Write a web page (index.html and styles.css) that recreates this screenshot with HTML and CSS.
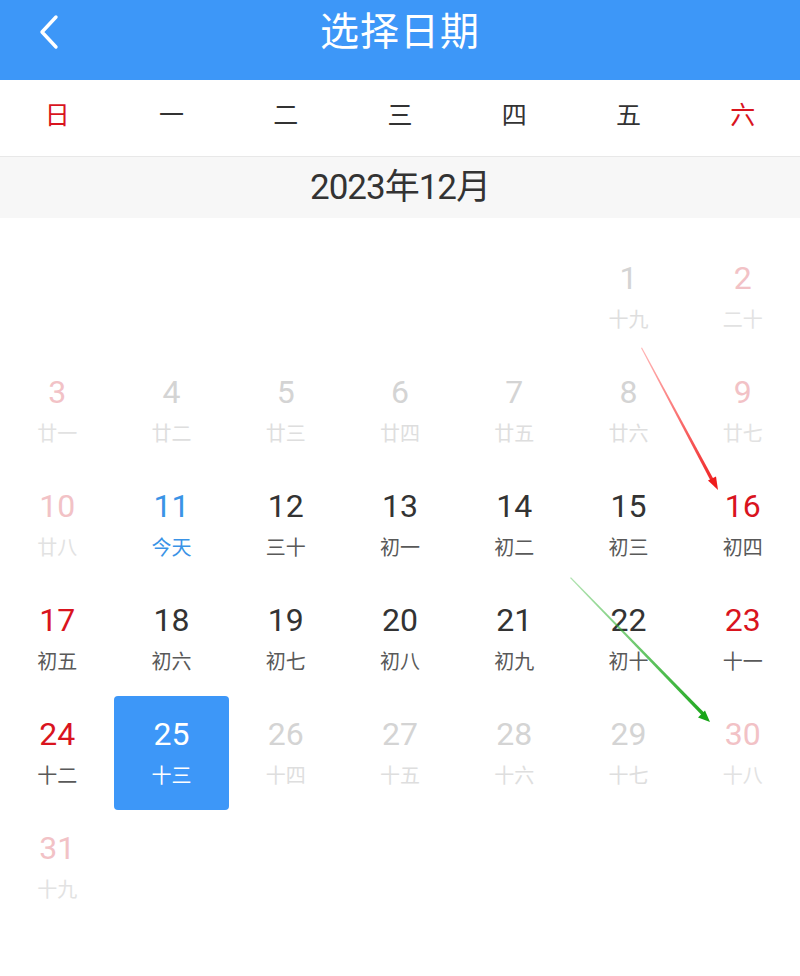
FILE: index.html
```html
<!DOCTYPE html>
<html lang="zh">
<head>
<meta charset="utf-8">
<link rel="stylesheet" href="styles.css">
</head>
<body>
<div class="page">
  <header class="topbar">
    <svg class="back" width="24" height="36" viewBox="0 0 24 36"><path d="M19 3 L5 18 L19 33" fill="none" stroke="#fff" stroke-width="3.4" stroke-linecap="round" stroke-linejoin="round"/></svg>
    <h1 class="title">选择日期</h1>
  </header>
  <div class="weekdays">
    <span class="red">日</span><span>一</span><span>二</span><span>三</span><span>四</span><span>五</span><span class="red">六</span>
  </div>
  <div class="month">2023年12月</div>
  <div class="grid">
    <div class="cell"></div><div class="cell"></div><div class="cell"></div><div class="cell"></div><div class="cell"></div>
    <div class="cell past"><b>1</b><i>十九</i></div>
    <div class="cell past wk"><b>2</b><i>二十</i></div>
    <div class="cell past wk"><b>3</b><i>廿一</i></div>
    <div class="cell past"><b>4</b><i>廿二</i></div>
    <div class="cell past"><b>5</b><i>廿三</i></div>
    <div class="cell past"><b>6</b><i>廿四</i></div>
    <div class="cell past"><b>7</b><i>廿五</i></div>
    <div class="cell past"><b>8</b><i>廿六</i></div>
    <div class="cell past wk"><b>9</b><i>廿七</i></div>
    <div class="cell past wk"><b>10</b><i>廿八</i></div>
    <div class="cell today"><b>11</b><i>今天</i></div>
    <div class="cell"><b>12</b><i>三十</i></div>
    <div class="cell"><b>13</b><i>初一</i></div>
    <div class="cell"><b>14</b><i>初二</i></div>
    <div class="cell"><b>15</b><i>初三</i></div>
    <div class="cell wk"><b>16</b><i>初四</i></div>
    <div class="cell wk"><b>17</b><i>初五</i></div>
    <div class="cell"><b>18</b><i>初六</i></div>
    <div class="cell"><b>19</b><i>初七</i></div>
    <div class="cell"><b>20</b><i>初八</i></div>
    <div class="cell"><b>21</b><i>初九</i></div>
    <div class="cell"><b>22</b><i>初十</i></div>
    <div class="cell wk"><b>23</b><i>十一</i></div>
    <div class="cell wk"><b>24</b><i>十二</i></div>
    <div class="cell sel"><b>25</b><i>十三</i></div>
    <div class="cell past"><b>26</b><i>十四</i></div>
    <div class="cell past"><b>27</b><i>十五</i></div>
    <div class="cell past"><b>28</b><i>十六</i></div>
    <div class="cell past"><b>29</b><i>十七</i></div>
    <div class="cell past wk"><b>30</b><i>十八</i></div>
    <div class="cell past wk"><b>31</b><i>十九</i></div>
  </div>
  <svg class="arrows" width="800" height="976" viewBox="0 0 800 976">
    <defs>
      <linearGradient id="gr" x1="641" y1="348" x2="718" y2="490" gradientUnits="userSpaceOnUse">
        <stop offset="0" stop-color="#ff4a4a" stop-opacity="0.4"/>
        <stop offset="1" stop-color="#ee1c1c"/>
      </linearGradient>
      <linearGradient id="gg" x1="570" y1="578" x2="710" y2="722" gradientUnits="userSpaceOnUse">
        <stop offset="0" stop-color="#3cb83c" stop-opacity="0.4"/>
        <stop offset="1" stop-color="#18a518"/>
      </linearGradient>
    </defs>
    <polygon points="641,348 642,347.5 714,480 711,481.5" fill="url(#gr)"/>
    <polygon points="718,490 708,480.5 716,476.5" fill="#ee1c1c"/>
    <polygon points="570,578 571,577.3 704.5,713 702,715.5" fill="url(#gg)"/>
    <polygon points="710,722 698,717.5 705,710.5" fill="#18a518"/>
  </svg>
</div>
</body>
</html>
```

FILE: styles.css
```css
* { box-sizing: border-box; margin: 0; padding: 0; }
html, body { width: 800px; height: 976px; background: #fff; }
body { font-family: Roboto, "Noto Sans CJK SC", sans-serif; color: #333; }
.page { position: relative; width: 800px; height: 976px; overflow: hidden; }
.topbar {
  height: 80px; background: #3d97f8; position: relative;
  display: flex; align-items: center; justify-content: center;
}
.back { position: absolute; left: 37px; top: 14px; }
.title {
  font-family: "Noto Sans CJK SC", sans-serif; font-weight: 400;
  font-size: 39px; color: #fff; line-height: 1; margin-top: -24px; letter-spacing: 1px;
}
.weekdays {
  height: 77px; display: grid; grid-template-columns: repeat(7, 1fr);
  align-items: center; justify-items: center;
  border-bottom: 1px solid #e8e8e8;
  font-family: "Noto Sans CJK SC", sans-serif; font-size: 25px; color: #333;
  padding-bottom: 10px;
}
.weekdays .red { color: #d9141e; }
.month {
  height: 61px; background: #f7f7f7; display: flex; align-items: center; justify-content: center;
  font-size: 35px; letter-spacing: -1px; color: #333; padding-bottom: 8px;
}
.grid {
  margin-top: 22px; display: grid; grid-template-columns: repeat(7, 1fr);
  grid-auto-rows: 114px;
}
.cell {
  display: flex; flex-direction: column; align-items: center;
  padding-top: 19px; border-radius: 4px;
}
.cell b { font-weight: 400; font-size: 32px; line-height: 38px; color: #333; }
.cell i {
  font-style: normal; font-family: "Noto Sans CJK SC", sans-serif;
  font-size: 20px; line-height: 26px; margin-top: 9px; color: #595959;
}
.cell.wk b { color: #d9141e; }
.cell.past b { color: #d4d4d4; }
.cell.past i { color: #dedede; }
.cell.past.wk b { color: #f2c2c6; }
.cell.past.wk i { color: #e2e2e2; }
.cell.today b, .cell.today i { color: #3a93e6; }
.cell.sel { background: #3d97f8; }
.cell.sel b, .cell.sel i { color: #fff; }
.arrows { position: absolute; left: 0; top: 0; pointer-events: none; }
```
